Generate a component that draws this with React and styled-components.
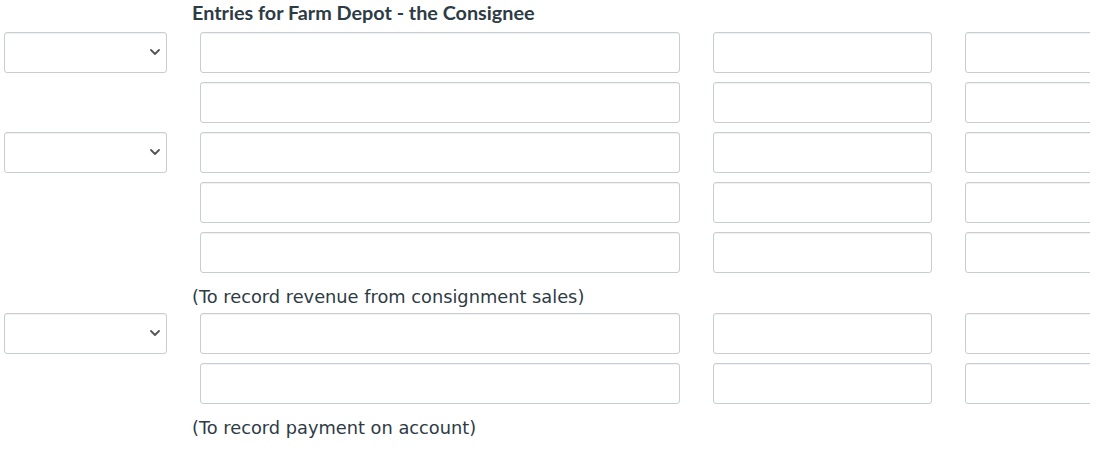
import styled, { createGlobalStyle } from "styled-components";

const GlobalStyle = createGlobalStyle`
  body {
    margin: 0;
    background: #ffffff;
    font-family: "DejaVu Sans", Verdana, sans-serif;
    color: #2d3b45;
  }
`;

const Sheet = styled.div`
  width: 1086px;
  padding: 0 0 24px 4px;
  overflow: hidden;
`;

const Grid = styled.div`
  display: grid;
  grid-template-columns: 163px 480px 219px 219px;
  column-gap: 33px;
  row-gap: 9px;
  width: max-content;
`;

const Heading = styled.h3`
  grid-column: 2 / -1;
  margin: 0 0 0 -8px;
  height: 23px;
  font-family: Lato, "Liberation Sans", sans-serif;
  font-weight: 700;
  font-size: 19.8px;
  line-height: 24px;
  color: #2d3b45;
`;

const Note = styled.div`
  grid-column: 2 / -1;
  margin-left: -8px;
  height: 22px;
  font-size: 17.8px;
  line-height: 30px;
  color: #2d3b45;
  white-space: nowrap;
`;

const field = `
  box-sizing: border-box;
  height: 41px;
  margin: 0;
  border: 1px solid #c7cdd1;
  border-radius: 3px;
  background: #ffffff;
  box-shadow: inset 0 1px 1px rgba(0, 0, 0, 0.06);
  font-family: "DejaVu Sans", sans-serif;
  font-size: 14px;
  color: #2d3b45;
  outline: none;
`;

const Input = styled.input`
  ${field}
  width: 100%;
  padding: 0 8px;
`;

const SelectWrap = styled.div`
  position: relative;
  grid-column: 1;
  height: 41px;
`;

const Select = styled.select`
  ${field}
  width: 100%;
  padding: 0 24px 0 8px;
  appearance: none;
  -webkit-appearance: none;
`;

const Chevron = styled.svg`
  position: absolute;
  right: 7px;
  top: 17px;
  width: 10px;
  height: 6px;
  pointer-events: none;
`;

const Blank = styled.div`
  grid-column: 1;
`;

function DateSelect() {
  return (
    <SelectWrap>
      <Select defaultValue="">
        <option value=""></option>
      </Select>
      <Chevron viewBox="0 0 10 6">
        <path d="M1 1l4 4 4-4" fill="none" stroke="#555" strokeWidth="1.8" strokeLinecap="round" strokeLinejoin="round" />
      </Chevron>
    </SelectWrap>
  );
}

function EntryRow({ withDate }) {
  return (
    <>
      {withDate ? <DateSelect /> : <Blank />}
      <Input type="text" />
      <Input type="text" />
      <Input type="text" />
    </>
  );
}

const entries = [
  { rows: [true, false] },
  { rows: [true, false, false], note: "(To record revenue from consignment sales)" },
  { rows: [true, false], note: "(To record payment on account)" },
];

export default function App() {
  return (
    <Sheet>
      <GlobalStyle />
      <Grid>
        <Heading>Entries for Farm Depot - the Consignee</Heading>
        {entries.map((entry, i) => (
          <>
            {entry.rows.map((withDate, j) => (
              <EntryRow key={`${i}-${j}`} withDate={withDate} />
            ))}
            {entry.note && <Note key={`n${i}`}>{entry.note}</Note>}
          </>
        ))}
      </Grid>
    </Sheet>
  );
}
